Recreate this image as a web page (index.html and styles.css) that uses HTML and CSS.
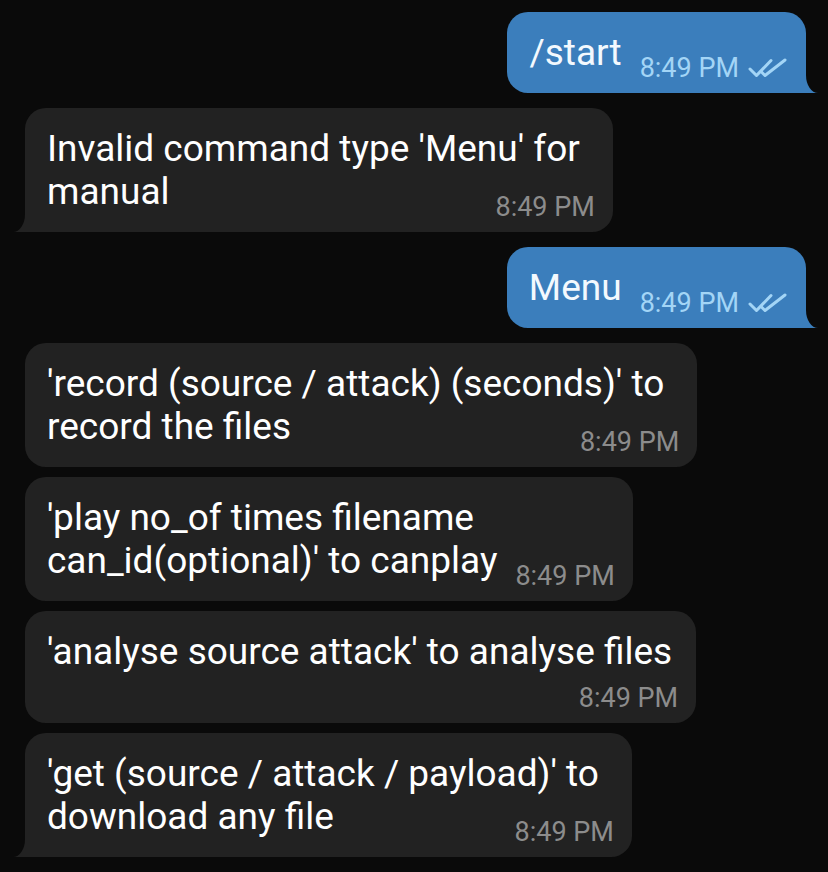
FILE: index.html
```html
<!DOCTYPE html>
<html lang="en">
<head>
<meta charset="utf-8">
<title>Chat</title>
<link rel="stylesheet" href="styles.css">
</head>
<body>
<main class="chat">
  <div class="bubble out tail-out">
    <p class="text">/start<span class="meta">8:49 PM<svg class="checks" viewBox="0 0 40 20" width="40" height="20"><path d="M2 11 L8.5 17.5 L23 2.5"/><path d="M13 13.5 L17 17.5 L37 2"/></svg></span></p>
  </div>

  <div class="bubble in tail-in">
    <p class="text">Invalid command type 'Menu' for<br>manual<span class="meta">8:49 PM</span></p>
  </div>

  <div class="bubble out tail-out">
    <p class="text">Menu<span class="meta">8:49 PM<svg class="checks" viewBox="0 0 40 20" width="40" height="20"><path d="M2 11 L8.5 17.5 L23 2.5"/><path d="M13 13.5 L17 17.5 L37 2"/></svg></span></p>
  </div>

  <div class="bubble in">
    <p class="text">'record (source / attack) (seconds)' to<br>record the files<span class="meta">8:49 PM</span></p>
  </div>

  <div class="bubble in grouped">
    <p class="text">'play no_of times filename<br>can_id(optional)' to canplay<span class="meta">8:49 PM</span></p>
  </div>

  <div class="bubble in grouped stacked">
    <p class="text">'analyse source attack' to analyse files<span class="meta">8:49 PM</span></p>
  </div>

  <div class="bubble in grouped tail-in">
    <p class="text">'get (source / attack / payload)' to<br>download any file<span class="meta">8:49 PM</span></p>
  </div>
</main>
</body>
</html>
```

FILE: styles.css
```css
html, body {
  margin: 0;
  background: #0a0a0a;
}

body {
  font-family: Roboto, "Noto Sans", "Liberation Sans", sans-serif;
}

.chat {
  box-sizing: border-box;
  width: 828px;
  height: 872px;
  overflow: hidden;
  display: flex;
  flex-direction: column;
  padding: 12px 22px 0 25px;
}

.bubble {
  position: relative;
  display: flow-root;
  box-sizing: border-box;
  padding: 19px 18px 9px 22px;
  border-radius: 21px;
  margin-top: 15px;
}

.bubble:first-child {
  margin-top: 0;
}

.bubble.grouped {
  margin-top: 10px;
}

.in {
  align-self: flex-start;
  background: #222222;
  color: #ffffff;
}

.out {
  align-self: flex-end;
  background: #3b7ebc;
  color: #f3f9fe;
}

.text {
  margin: 0;
  font-size: 37px;
  line-height: 43px;
  padding-right: 15px;
}

.meta {
  float: right;
  display: flex;
  align-items: center;
  margin: 21px -15px 0 18px;
  font-size: 27px;
  line-height: 32px;
  color: #8c8c8c;
  white-space: nowrap;
}

.out .meta {
  color: #a3d5f6;
}

.stacked .text {
  padding-right: 6px;
}

.stacked .meta {
  float: none;
  justify-content: flex-end;
  margin: 9px -6px 0 0;
}

.checks {
  margin-left: 9px;
  fill: none;
  stroke: #a3d5f6;
  stroke-width: 3;
  stroke-linecap: round;
  stroke-linejoin: round;
}

/* bubble tails */
.tail-in {
  border-bottom-left-radius: 0;
}

.tail-out {
  border-bottom-right-radius: 0;
}

.tail-in::before,
.tail-in::after,
.tail-out::before,
.tail-out::after {
  content: "";
  position: absolute;
  bottom: 0;
  width: 12px;
  height: 18px;
}

.tail-in::before {
  left: -12px;
  background: #222222;
}

.tail-in::after {
  left: -12px;
  background: #0a0a0a;
  border-bottom-right-radius: 12px 18px;
}

.tail-out::before {
  right: -12px;
  background: #3b7ebc;
}

.tail-out::after {
  right: -12px;
  background: #0a0a0a;
  border-bottom-left-radius: 12px 18px;
}
```
